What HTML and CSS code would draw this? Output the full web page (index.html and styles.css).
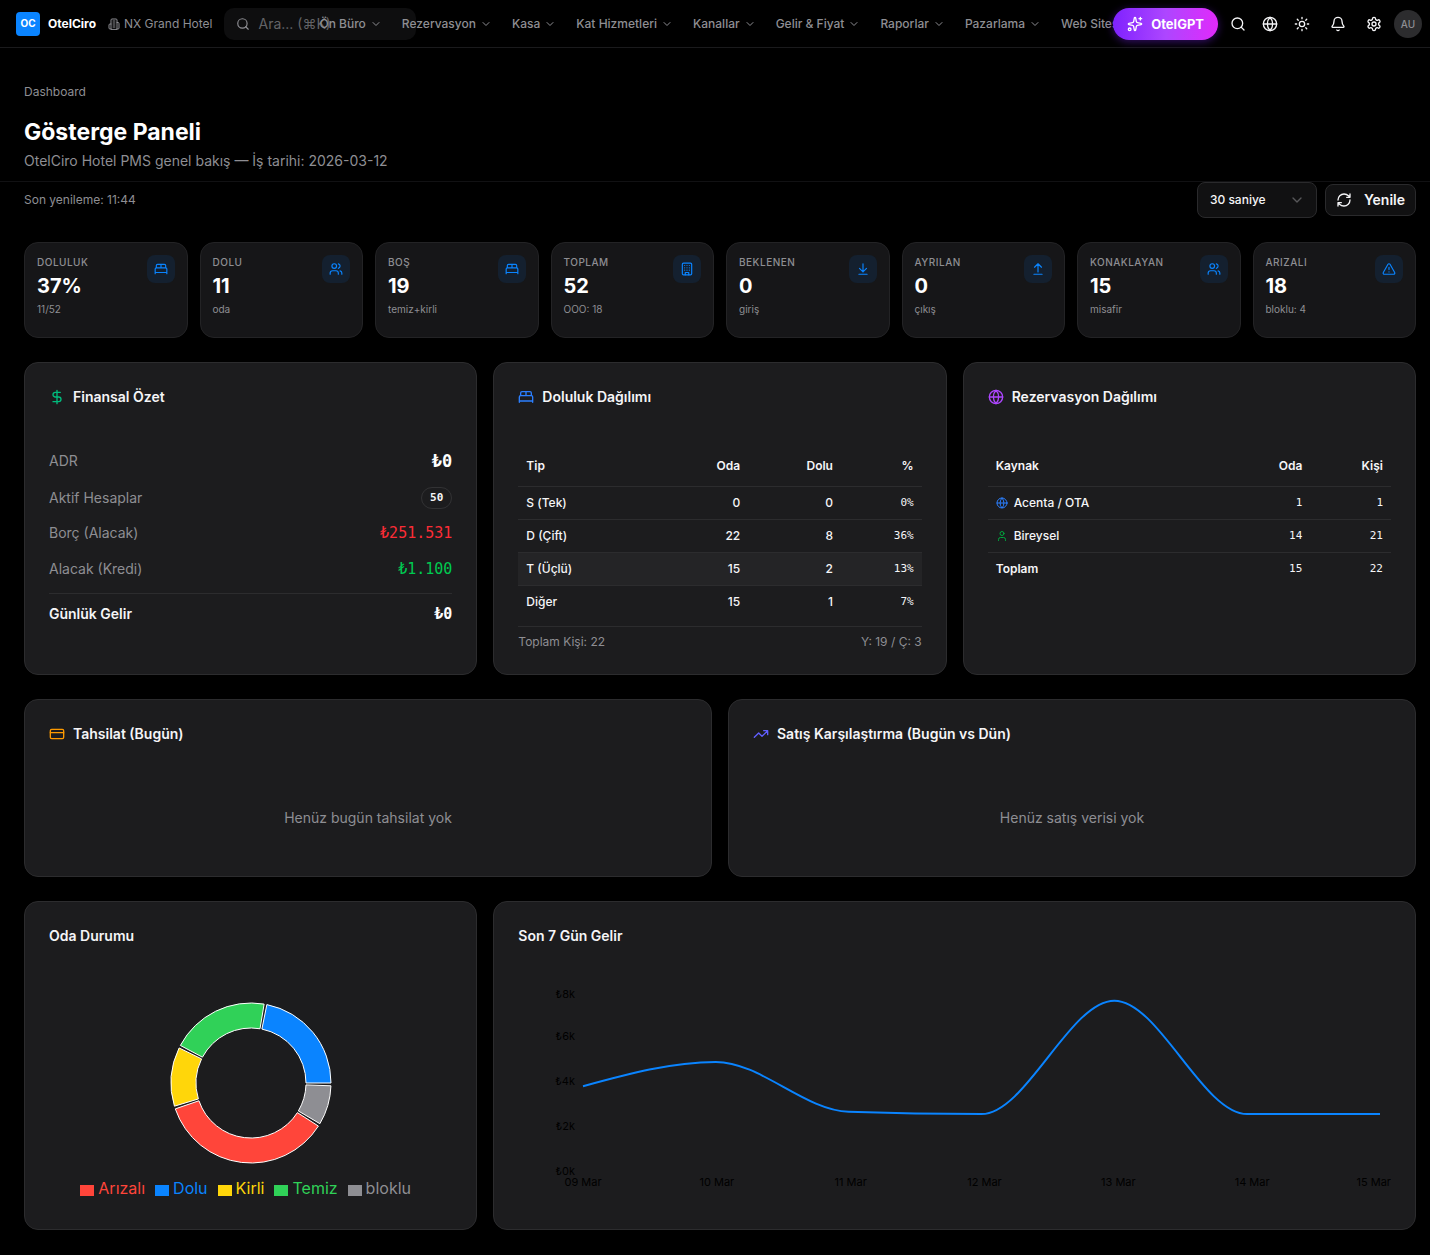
FILE: index.html
```html
<!DOCTYPE html>
<html lang="tr">
<head>
  <meta charset="UTF-8">
  <meta name="viewport" content="width=device-width, initial-scale=1.0">
  <title>Gösterge Paneli - OtelCiro</title>
  <link rel="stylesheet" href="styles.css">
</head>
<body>
  <!-- icon set -->
  <svg class="sprite" aria-hidden="true">
    <symbol id="i-chevron" viewBox="0 0 24 24"><path d="m6 9 6 6 6-6"/></symbol>
    <symbol id="i-search" viewBox="0 0 24 24"><circle cx="11" cy="11" r="8"/><path d="m21 21-4.3-4.3"/></symbol>
    <symbol id="i-globe" viewBox="0 0 24 24"><circle cx="12" cy="12" r="10"/><path d="M12 2a14.5 14.5 0 0 0 0 20 14.5 14.5 0 0 0 0-20M2 12h20"/></symbol>
    <symbol id="i-sun" viewBox="0 0 24 24"><circle cx="12" cy="12" r="4"/><path d="M12 2v2M12 20v2M4.93 4.93l1.41 1.41M17.66 17.66l1.41 1.41M2 12h2M20 12h2M6.34 17.66l-1.41 1.41M19.07 4.93l-1.41 1.41"/></symbol>
    <symbol id="i-bell" viewBox="0 0 24 24"><path d="M10.27 21a2 2 0 0 0 3.46 0M3.26 15.33A1 1 0 0 0 4 17h16a1 1 0 0 0 .74-1.67C19.41 13.96 18 12.5 18 8A6 6 0 0 0 6 8c0 4.5-1.41 5.96-2.74 7.33"/></symbol>
    <symbol id="i-settings" viewBox="0 0 24 24"><path d="M12.22 2h-.44a2 2 0 0 0-2 2v.18a2 2 0 0 1-1 1.73l-.43.25a2 2 0 0 1-2 0l-.15-.08a2 2 0 0 0-2.73.73l-.22.38a2 2 0 0 0 .73 2.73l.15.1a2 2 0 0 1 1 1.72v.51a2 2 0 0 1-1 1.74l-.15.09a2 2 0 0 0-.73 2.73l.22.38a2 2 0 0 0 2.73.73l.15-.08a2 2 0 0 1 2 0l.43.25a2 2 0 0 1 1 1.73V20a2 2 0 0 0 2 2h.44a2 2 0 0 0 2-2v-.18a2 2 0 0 1 1-1.73l.43-.25a2 2 0 0 1 2 0l.15.08a2 2 0 0 0 2.73-.73l.22-.39a2 2 0 0 0-.73-2.73l-.15-.08a2 2 0 0 1-1-1.74v-.5a2 2 0 0 1 1-1.74l.15-.09a2 2 0 0 0 .73-2.73l-.22-.38a2 2 0 0 0-2.73-.73l-.15.08a2 2 0 0 1-2 0l-.43-.25a2 2 0 0 1-1-1.73V4a2 2 0 0 0-2-2z"/><circle cx="12" cy="12" r="3"/></symbol>
    <symbol id="i-sparkles" viewBox="0 0 24 24"><path d="M11.02 2.81a1 1 0 0 1 1.96 0l1.05 5.56a2 2 0 0 0 1.6 1.6l5.56 1.05a1 1 0 0 1 0 1.96l-5.56 1.05a2 2 0 0 0-1.6 1.6l-1.05 5.56a1 1 0 0 1-1.96 0l-1.05-5.56a2 2 0 0 0-1.6-1.6l-5.56-1.05a1 1 0 0 1 0-1.96l5.56-1.05a2 2 0 0 0 1.6-1.6zM20 2v4M22 4h-4"/><circle cx="4" cy="20" r="2"/></symbol>
    <symbol id="i-hotel" viewBox="0 0 24 24"><path d="M6 22V4a2 2 0 0 1 2-2h8a2 2 0 0 1 2 2v18ZM6 12H4a2 2 0 0 0-2 2v6a2 2 0 0 0 2 2h2M18 9h2a2 2 0 0 1 2 2v9a2 2 0 0 1-2 2h-2M10 6h4M10 10h4M10 14h4M10 18h4"/></symbol>
    <symbol id="i-refresh" viewBox="0 0 24 24"><path d="M3 12a9 9 0 0 1 9-9 9.75 9.75 0 0 1 6.74 2.74L21 8M21 3v5h-5M21 12a9 9 0 0 1-9 9 9.75 9.75 0 0 1-6.74-2.74L3 16M8 16H3v5"/></symbol>
    <symbol id="i-bed" viewBox="0 0 24 24"><path d="M2 20v-8a2 2 0 0 1 2-2h16a2 2 0 0 1 2 2v8M4 10V6a2 2 0 0 1 2-2h12a2 2 0 0 1 2 2v4M12 4v6M2 18h20"/></symbol>
    <symbol id="i-users" viewBox="0 0 24 24"><path d="M16 21v-2a4 4 0 0 0-4-4H6a4 4 0 0 0-4 4v2M22 21v-2a4 4 0 0 0-3-3.87M16 3.13a4 4 0 0 1 0 7.75"/><circle cx="9" cy="7" r="4"/></symbol>
    <symbol id="i-user" viewBox="0 0 24 24"><path d="M19 21v-2a4 4 0 0 0-4-4H9a4 4 0 0 0-4 4v2"/><circle cx="12" cy="7" r="4"/></symbol>
    <symbol id="i-building" viewBox="0 0 24 24"><rect x="4" y="2" width="16" height="20" rx="2"/><path d="M9 22v-4h6v4M8 6h.01M16 6h.01M12 6h.01M12 10h.01M12 14h.01M16 10h.01M16 14h.01M8 10h.01M8 14h.01"/></symbol>
    <symbol id="i-down" viewBox="0 0 24 24"><path d="M12 17V3M6 11l6 6 6-6M19 21H5"/></symbol>
    <symbol id="i-up" viewBox="0 0 24 24"><path d="M18 9l-6-6-6 6M12 3v14M5 21h14"/></symbol>
    <symbol id="i-alert" viewBox="0 0 24 24"><path d="m21.73 18-8-14a2 2 0 0 0-3.48 0l-8 14A2 2 0 0 0 4 21h16a2 2 0 0 0 1.73-3M12 9v4M12 17h.01"/></symbol>
    <symbol id="i-dollar" viewBox="0 0 24 24"><path d="M12 2v20M17 5H9.5a3.5 3.5 0 0 0 0 7h5a3.5 3.5 0 0 1 0 7H6"/></symbol>
    <symbol id="i-card" viewBox="0 0 24 24"><rect x="2" y="5" width="20" height="14" rx="2"/><path d="M2 10h20"/></symbol>
    <symbol id="i-trend" viewBox="0 0 24 24"><path d="m22 7-8.5 8.5-5-5L2 17M16 7h6v6"/></symbol>
  </svg>

  <header class="topbar">
    <div class="brand">
      <span class="logo">OC</span>
      <strong class="brand-name">OtelCiro</strong>
    </div>
    <div class="hotel"><svg class="icon icon-xs"><use href="#i-hotel"/></svg>NX Grand Hotel</div>
    <div class="search">
      <svg class="icon icon-sm"><use href="#i-search"/></svg>
      <input type="search" placeholder="Ara... (⌘K)" aria-label="Ara">
    </div>
    <nav class="menu">
      <button type="button">Ön Büro<svg class="icon icon-xs"><use href="#i-chevron"/></svg></button>
      <button type="button">Rezervasyon<svg class="icon icon-xs"><use href="#i-chevron"/></svg></button>
      <button type="button">Kasa<svg class="icon icon-xs"><use href="#i-chevron"/></svg></button>
      <button type="button">Kat Hizmetleri<svg class="icon icon-xs"><use href="#i-chevron"/></svg></button>
      <button type="button">Kanallar<svg class="icon icon-xs"><use href="#i-chevron"/></svg></button>
      <button type="button">Gelir &amp; Fiyat<svg class="icon icon-xs"><use href="#i-chevron"/></svg></button>
      <button type="button">Raporlar<svg class="icon icon-xs"><use href="#i-chevron"/></svg></button>
      <button type="button">Pazarlama<svg class="icon icon-xs"><use href="#i-chevron"/></svg></button>
      <button type="button">Web Sitesi<svg class="icon icon-xs"><use href="#i-chevron"/></svg></button>
    </nav>
    <div class="actions">
      <button type="button" class="gpt"><svg class="icon"><use href="#i-sparkles"/></svg>OtelGPT</button>
      <div class="action-group">
        <button type="button" class="icon-btn" aria-label="Ara"><svg class="icon"><use href="#i-search"/></svg></button>
        <button type="button" class="icon-btn" aria-label="Dil"><svg class="icon"><use href="#i-globe"/></svg></button>
        <button type="button" class="icon-btn" aria-label="Tema"><svg class="icon"><use href="#i-sun"/></svg></button>
      </div>
      <button type="button" class="icon-btn" aria-label="Bildirimler"><svg class="icon"><use href="#i-bell"/></svg></button>
      <button type="button" class="icon-btn" aria-label="Ayarlar"><svg class="icon"><use href="#i-settings"/></svg></button>
      <button type="button" class="avatar">AU</button>
    </div>
  </header>

  <div class="hero">
    <div class="breadcrumb">Dashboard</div>
    <h1>Gösterge Paneli</h1>
    <p>OtelCiro Hotel PMS genel bakış — İş tarihi: 2026-03-12</p>
  </div>

  <main>
    <div class="toolbar">
      <span class="refreshed">Son yenileme: 11:44</span>
      <div class="select-wrap">
        <select aria-label="Yenileme aralığı">
          <option>30 saniye</option>
          <option>60 saniye</option>
        </select>
        <svg class="icon"><use href="#i-chevron"/></svg>
      </div>
      <button type="button" class="refresh"><svg class="icon"><use href="#i-refresh"/></svg>Yenile</button>
    </div>

    <section class="stats">
      <div class="stat">
        <div><div class="stat-label">DOLULUK</div><div class="stat-value">37%</div><div class="stat-sub">11/52</div></div>
        <span class="tile"><svg class="icon icon-sm"><use href="#i-bed"/></svg></span>
      </div>
      <div class="stat">
        <div><div class="stat-label">DOLU</div><div class="stat-value">11</div><div class="stat-sub">oda</div></div>
        <span class="tile"><svg class="icon icon-sm"><use href="#i-users"/></svg></span>
      </div>
      <div class="stat">
        <div><div class="stat-label">BOŞ</div><div class="stat-value">19</div><div class="stat-sub">temiz+kirli</div></div>
        <span class="tile"><svg class="icon icon-sm"><use href="#i-bed"/></svg></span>
      </div>
      <div class="stat">
        <div><div class="stat-label">TOPLAM</div><div class="stat-value">52</div><div class="stat-sub">OOO: 18</div></div>
        <span class="tile"><svg class="icon icon-sm"><use href="#i-building"/></svg></span>
      </div>
      <div class="stat">
        <div><div class="stat-label">BEKLENEN</div><div class="stat-value">0</div><div class="stat-sub">giriş</div></div>
        <span class="tile"><svg class="icon icon-sm"><use href="#i-down"/></svg></span>
      </div>
      <div class="stat">
        <div><div class="stat-label">AYRILAN</div><div class="stat-value">0</div><div class="stat-sub">çıkış</div></div>
        <span class="tile"><svg class="icon icon-sm"><use href="#i-up"/></svg></span>
      </div>
      <div class="stat">
        <div><div class="stat-label">KONAKLAYAN</div><div class="stat-value">15</div><div class="stat-sub">misafir</div></div>
        <span class="tile"><svg class="icon icon-sm"><use href="#i-users"/></svg></span>
      </div>
      <div class="stat">
        <div><div class="stat-label">ARIZALI</div><div class="stat-value">18</div><div class="stat-sub">bloklu: 4</div></div>
        <span class="tile"><svg class="icon icon-sm"><use href="#i-alert"/></svg></span>
      </div>
    </section>

    <section class="row row-3">
      <div class="card">
        <h2><svg class="icon green"><use href="#i-dollar"/></svg>Finansal Özet</h2>
        <div class="finance">
          <div class="line line-lg"><span>ADR</span><b class="mono">₺0</b></div>
          <div class="line line-badge"><span>Aktif Hesaplar</span><span class="badge mono">50</span></div>
          <div class="line"><span>Borç (Alacak)</span><span class="mono debit">₺251.531</span></div>
          <div class="line"><span>Alacak (Kredi)</span><span class="mono credit">₺1.100</span></div>
          <div class="line line-total"><span>Günlük Gelir</span><b class="mono">₺0</b></div>
        </div>
      </div>

      <div class="card">
        <h2><svg class="icon blue"><use href="#i-bed"/></svg>Doluluk Dağılımı</h2>
        <table class="occupancy">
          <thead>
            <tr><th>Tip</th><th>Oda</th><th>Dolu</th><th>%</th></tr>
          </thead>
          <tbody>
            <tr><td>S (Tek)</td><td>0</td><td>0</td><td class="mono">0%</td></tr>
            <tr><td>D (Çift)</td><td>22</td><td>8</td><td class="mono">36%</td></tr>
            <tr class="active"><td>T (Üçlü)</td><td>15</td><td>2</td><td class="mono">13%</td></tr>
            <tr><td>Diğer</td><td>15</td><td>1</td><td class="mono">7%</td></tr>
          </tbody>
        </table>
        <div class="card-foot"><span>Toplam Kişi: 22</span><span>Y: 19 / Ç: 3</span></div>
      </div>

      <div class="card">
        <h2><svg class="icon purple"><use href="#i-globe"/></svg>Rezervasyon Dağılımı</h2>
        <table class="sources">
          <thead>
            <tr><th>Kaynak</th><th>Oda</th><th>Kişi</th></tr>
          </thead>
          <tbody>
            <tr><td><span class="source"><svg class="icon icon-xs blue"><use href="#i-globe"/></svg>Acenta / OTA</span></td><td class="mono">1</td><td class="mono">1</td></tr>
            <tr><td><span class="source"><svg class="icon icon-xs lime"><use href="#i-user"/></svg>Bireysel</span></td><td class="mono">14</td><td class="mono">21</td></tr>
            <tr><td class="total">Toplam</td><td class="mono">15</td><td class="mono">22</td></tr>
          </tbody>
        </table>
      </div>
    </section>

    <section class="row row-2">
      <div class="card">
        <h2><svg class="icon orange"><use href="#i-card"/></svg>Tahsilat (Bugün)</h2>
        <p class="empty">Henüz bugün tahsilat yok</p>
      </div>
      <div class="card">
        <h2><svg class="icon indigo"><use href="#i-trend"/></svg>Satış Karşılaştırma (Bugün vs Dün)</h2>
        <p class="empty">Henüz satış verisi yok</p>
      </div>
    </section>

    <section class="row row-3">
      <div class="card">
        <h2>Oda Durumu</h2>
        <div class="rooms">
          <svg id="roomChart" class="donut" viewBox="0 0 164 164"></svg>
          <ul id="roomLegend" class="legend"></ul>
        </div>
      </div>
      <div class="card card-wide">
        <h2>Son 7 Gün Gelir</h2>
        <svg id="incomeChart" class="income"></svg>
      </div>
    </section>
  </main>

  <script src="script.js"></script>
</body>
</html>
```

FILE: styles.css
```css
* {
  box-sizing: border-box;
}
body {
  margin: 0;
  background-color: #000;
  color: #f5f5f7;
  font-family: Inter, "Liberation Sans", sans-serif;
  font-size: 14px;
  line-height: 24px;
}
button, input, select {
  font: inherit;
  color: inherit;
  background: none;
  border: 0;
  margin: 0;
  padding: 0;
}
h1, h2, p, ul {
  margin: 0;
  padding: 0;
}
.sprite {
  display: none;
}
.icon {
  flex: none;
  width: 16px;
  height: 16px;
  fill: none;
  stroke: currentColor;
  stroke-width: 2;
  stroke-linecap: round;
  stroke-linejoin: round;
}
.icon-sm {
  width: 14px;
  height: 14px;
}
.icon-xs {
  width: 12px;
  height: 12px;
}
.mono {
  font-family: "DejaVu Sans Mono", "Liberation Mono", monospace;
}
.green { color: #00bc7d; }
.lime { color: #00a63e; }
.blue { color: #2b7fff; }
.purple { color: #ad46ff; }
.orange { color: #fe9a00; }
.indigo { color: #615fff; }

/* top bar */
.topbar {
  display: flex;
  align-items: center;
  height: 48px;
  padding: 0 8px 0 16px;
  border-bottom: 1px solid #1a1a1c;
  font-size: 12px;
}
.brand {
  display: flex;
  align-items: center;
  gap: 8px;
}
.logo {
  width: 24px;
  height: 24px;
  border-radius: 4px;
  background-color: #0a84ff;
  color: #fff;
  font-size: 10px;
  font-weight: 700;
  line-height: 22px;
  text-align: center;
}
.brand-name {
  font-weight: 700;
  color: #fff;
}
.hotel {
  display: flex;
  align-items: center;
  gap: 4px;
  margin-left: 12px;
  color: #8e8e93;
  white-space: nowrap;
}
.search {
  display: flex;
  align-items: center;
  flex: none;
  gap: 8px;
  width: 192px;
  height: 32px;
  margin-left: 12px;
  /* the menu slides over the end of the box */
  margin-right: -105px;
  padding: 0 12px;
  border-radius: 10px;
  background-color: #0e0e0f;
  color: #8e8e93;
}
.search input {
  flex: 1;
  min-width: 0;
  font-size: 14px;
  outline: none;
}
.search input::placeholder {
  color: #636366;
}
.menu {
  display: flex;
  flex: 1;
  min-width: 0;
  gap: 4px;
}
.menu button {
  display: flex;
  align-items: center;
  gap: 4px;
  padding: 0 8px;
  color: #8e8e93;
  font-weight: 500;
  white-space: nowrap;
}
.actions {
  display: flex;
  align-items: center;
  flex: none;
  gap: 4px;
  z-index: 1;
}
.gpt {
  display: flex;
  align-items: center;
  gap: 8px;
  height: 32px;
  padding: 0 14px;
  border-radius: 16px;
  background: linear-gradient(90deg, #7f22fe, #ad46ff 50%, #e12afb);
  box-shadow: 0 2px 8px rgba(127, 34, 254, 0.4);
  color: #fff;
  font-size: 13px;
  font-weight: 700;
}
.action-group {
  display: flex;
}
.icon-btn {
  display: flex;
  align-items: center;
  justify-content: center;
  width: 32px;
  height: 32px;
  color: #f5f5f7;
}
.avatar {
  width: 28px;
  height: 28px;
  border-radius: 50%;
  background-color: #2c2c2e;
  color: #8e8e93;
  font-size: 10px;
  font-weight: 500;
}

/* page heading */
.hero {
  padding: 35px 24px 8px;
  border-bottom: 1px solid #111113;
  color: #8e8e93;
}
.breadcrumb {
  font-size: 12px;
  line-height: 18px;
}
.hero h1 {
  margin: 16px 0 2px;
  color: #fff;
  font-size: 23px;
  font-weight: 700;
  line-height: 30px;
}

main {
  display: flex;
  flex-direction: column;
  gap: 24px;
  padding: 0 14px 24px 24px;
}
.toolbar {
  display: flex;
  align-items: center;
  gap: 8px;
}
.refreshed {
  flex: 1;
  color: #8e8e93;
  font-size: 12px;
}
.select-wrap {
  position: relative;
}
.select-wrap select {
  appearance: none;
  display: block;
  width: 120px;
  height: 36px;
  padding: 0 12px;
  border: 1px solid #2a2a2c;
  border-radius: 8px;
  background-color: #111112;
  font-size: 12px;
  font-weight: 500;
}
.select-wrap .icon {
  position: absolute;
  top: 10px;
  right: 12px;
  color: #57575a;
  pointer-events: none;
}
.refresh {
  display: flex;
  align-items: center;
  gap: 12px;
  height: 32px;
  padding: 0 10px;
  border: 1px solid #2a2a2c;
  border-radius: 8px;
  background-color: #111112;
  font-weight: 600;
}

/* stat tiles */
.stats {
  display: grid;
  grid-template-columns: repeat(8, 1fr);
  gap: 12px;
}
.stat {
  display: flex;
  justify-content: space-between;
  min-height: 96px;
  padding: 12px;
  border: 1px solid #232325;
  border-radius: 14px;
  background-color: #161618;
}
.stat-label {
  color: #8e8e93;
  font-size: 10px;
  font-weight: 500;
  letter-spacing: 0.05em;
  line-height: 15px;
}
.stat-value {
  color: #fff;
  font-size: 20px;
  font-weight: 700;
  line-height: 32px;
}
.stat-sub {
  color: #8e8e93;
  font-size: 10px;
  line-height: 14px;
}
.tile {
  display: flex;
  align-items: center;
  justify-content: center;
  width: 28px;
  height: 28px;
  border-radius: 8px;
  background-color: #14202f;
  color: #0a84ff;
}

/* cards */
.row {
  display: grid;
  gap: 16px;
}
.row-2 {
  grid-template-columns: repeat(2, 1fr);
}
.row-3 {
  grid-template-columns: repeat(3, 1fr);
}
.card {
  min-width: 0;
  padding: 24px;
  border: 1px solid #2c2c2e;
  border-radius: 14px;
  background-color: #1c1c1e;
}
.card-wide {
  grid-column: span 2;
}
.card h2 {
  display: flex;
  align-items: center;
  gap: 8px;
  margin-bottom: 39px;
  font-size: 14px;
  font-weight: 600;
  line-height: 20px;
}
.empty {
  padding: 24px 0;
  color: #8e8e93;
  line-height: 21px;
  text-align: center;
}

.finance {
  display: flex;
  flex-direction: column;
  gap: 12px;
  padding-top: 1px;
}
.line {
  display: flex;
  justify-content: space-between;
  align-items: center;
  color: #8e8e93;
}
.line .mono {
  font-size: 15px;
}
.line b {
  color: #fff;
}
.line-lg {
  height: 28px;
}
.line-lg .mono {
  font-size: 17px;
}
.line-badge {
  height: 22px;
}
.line .badge {
  padding: 0 8px;
  border: 1px solid #323234;
  border-radius: 11px;
  color: #f5f5f7;
  font-size: 11px;
  font-weight: 700;
  line-height: 20px;
}
.line .debit { color: #fb2c36; }
.line .credit { color: #00c950; }
.line-total {
  padding-top: 8px;
  border-top: 1px solid #2c2c2e;
  color: #f5f5f7;
  font-weight: 600;
}

table {
  width: 100%;
  border-spacing: 0;
  font-size: 12px;
  font-weight: 500;
}
th, td {
  padding: 0 8px;
  border-bottom: 1px solid #2c2c2e;
  text-align: right;
}
th {
  height: 41px;
  font-weight: 600;
}
td {
  height: 33px;
  line-height: 16px;
}
th:first-child, td:first-child {
  text-align: left;
}
tbody tr:last-child td {
  height: 32px;
  border-bottom: 0;
}
.active td {
  background-color: #242426;
}
td.mono {
  font-size: 11px;
}
td.total {
  font-weight: 600;
}
.occupancy th:nth-child(1) { width: 35%; }
.occupancy th:nth-child(2) { width: 22%; }
.occupancy th:nth-child(3) { width: 23%; }
.occupancy th:nth-child(4) { width: 20%; }
.sources th:nth-child(1) { width: 59%; }
.sources th:nth-child(2) { width: 21%; }
.sources th:nth-child(3) { width: 20%; }
.source {
  display: flex;
  align-items: center;
  gap: 6px;
}
.card-foot {
  display: flex;
  justify-content: space-between;
  margin-top: 8px;
  padding-top: 7px;
  border-top: 1px solid #2c2c2e;
  color: #8e8e93;
  font-size: 12px;
  line-height: 16px;
}

/* charts */
.rooms {
  display: flex;
  flex-direction: column;
  align-items: center;
  height: 220px;
  padding-top: 16px;
}
.donut {
  width: 164px;
  height: 164px;
  stroke: #fff;
}
.legend {
  display: flex;
  gap: 10px;
  margin-top: 11px;
  padding-right: 10px;
  list-style: none;
  font-size: 16px;
}
.legend li {
  display: flex;
  align-items: center;
  gap: 4px;
}
.legend i {
  width: 14px;
  height: 11px;
  margin-top: 4px;
  background-color: currentColor;
}
.income {
  display: block;
  width: 100%;
  height: 220px;
}
.income path {
  fill: none;
  stroke: #0a84ff;
  stroke-width: 2;
}
.income text {
  fill: #000;
  font-size: 11px;
}
```

FILE: script.js
```js
const rooms = [
  { name: "Arızalı", count: 18, color: "#ff453a" },
  { name: "Dolu", count: 11, color: "#0a84ff" },
  { name: "Kirli", count: 6, color: "#ffd60a" },
  { name: "Temiz", count: 10, color: "#30d158" },
  { name: "bloklu", count: 4, color: "#8e8e93" }
];
// order of the slices, counter-clockwise from 3 o'clock
const sliceOrder = ["Dolu", "Temiz", "Kirli", "Arızalı", "bloklu"];

const income = [
  { day: "09 Mar", value: 3770 },
  { day: "10 Mar", value: 4850 },
  { day: "11 Mar", value: 2630 },
  { day: "12 Mar", value: 2530 },
  { day: "13 Mar", value: 7570 },
  { day: "14 Mar", value: 2530 },
  { day: "15 Mar", value: 2530 }
];

function drawRooms() {
  const total = rooms.reduce((sum, r) => sum + r.count, 0);
  const pad = 2;
  const c = 82, outer = 80, inner = 55;
  const unit = (360 - pad * rooms.length) / total;
  const point = (r, deg) => {
    const a = deg * Math.PI / 180;
    return (c + r * Math.cos(a)).toFixed(2) + " " + (c - r * Math.sin(a)).toFixed(2);
  };
  let start = 0;
  let html = "";
  sliceOrder.forEach((name) => {
    const room = rooms.find((r) => r.name === name);
    const end = start + room.count * unit;
    html += `<path fill="${room.color}" d="M${point(outer, start)}A${outer} ${outer} 0 0 0 ${point(outer, end)}L${point(inner, end)}A${inner} ${inner} 0 0 1 ${point(inner, start)}Z"/>`;
    start = end + pad;
  });
  document.getElementById("roomChart").innerHTML = html;
  document.getElementById("roomLegend").innerHTML = rooms
    .map((r) => `<li style="color: ${r.color}"><i></i>${r.name}</li>`)
    .join("");
}

// Monotone cubic curve through the points
function monotonePath(pts) {
  const n = pts.length;
  const slope = [];
  for (let i = 0; i < n - 1; i++) {
    slope.push((pts[i + 1].y - pts[i].y) / (pts[i + 1].x - pts[i].x));
  }
  const tan = [];
  for (let i = 1; i < n - 1; i++) {
    const a = slope[i - 1], b = slope[i];
    tan[i] = (Math.sign(a) + Math.sign(b)) * Math.min(Math.abs(a), Math.abs(b), Math.abs(a + b) / 4) || 0;
  }
  tan[0] = (3 * slope[0] - tan[1]) / 2;
  tan[n - 1] = (3 * slope[n - 2] - tan[n - 2]) / 2;
  let d = `M${pts[0].x},${pts[0].y}`;
  for (let i = 0; i < n - 1; i++) {
    const dx = (pts[i + 1].x - pts[i].x) / 3;
    d += `C${pts[i].x + dx},${pts[i].y + dx * tan[i]} ${pts[i + 1].x - dx},${pts[i + 1].y - dx * tan[i + 1]} ${pts[i + 1].x},${pts[i + 1].y}`;
  }
  return d;
}

function drawIncome() {
  const svg = document.getElementById("incomeChart");
  const width = svg.clientWidth;
  const left = 65, top = 6, bottom = 186;
  const labelStep = (width - left - 5) / (income.length - 1);
  const step = (width - left - 11) / (income.length - 1);
  const y = (v) => bottom - (v / 8000) * (bottom - top);
  let html = "";
  [0, 2, 4, 6, 8].forEach((k) => {
    const ty = Math.max(y(k * 1000), 9) + 4;
    html += `<text x="${left - 8}" y="${ty}" text-anchor="end">₺${k}k</text>`;
  });
  income.forEach((p, i) => {
    const last = i === income.length - 1;
    html += `<text x="${last ? width : left + i * labelStep}" y="201" text-anchor="${last ? "end" : "middle"}">${p.day}</text>`;
  });
  html += `<path d="${monotonePath(income.map((p, i) => ({ x: left + i * step, y: y(p.value) })))}"/>`;
  svg.innerHTML = html;
}

drawRooms();
drawIncome();
window.addEventListener("resize", drawIncome);
```
